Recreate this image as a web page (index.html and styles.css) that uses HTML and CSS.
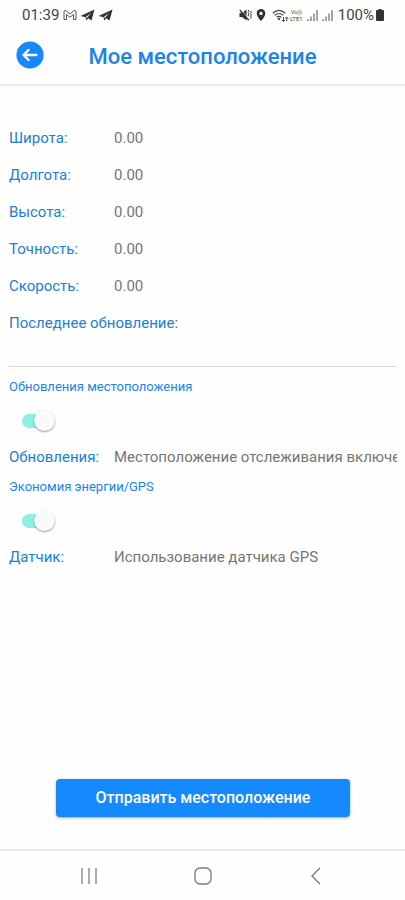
FILE: index.html
```
<!DOCTYPE html>
<html lang="ru">
<head>
<meta charset="utf-8">
<meta name="viewport" content="width=device-width, initial-scale=1">
<title>Мое местоположение</title>
<link rel="stylesheet" href="styles.css">
</head>
<body>
<div class="status">
  <span class="clock">01:39</span>
  <svg class="gmail" width="14" height="12" viewBox="0 0 14 12" fill="none" stroke="#555"><path d="M1 10.500V2.200Q1.700.8 3 1.700L7 5l4-3.300Q12.300.8 13 2.200v8.300h-2.500V5.500L7 8.200 3.500 5.500v5z"/></svg>
  <svg class="plane" width="15" height="12" viewBox="0 0 15 12"><path d="M.5 7 14.500.5 11.500 11.500 8.200 9.300 6.300 11.500 5.500 8.300z" fill="#333"/><path d="m5.500 8.300 5.500-4.300L7 8.800" fill="#fff"/></svg>
  <svg class="plane" width="15" height="12" viewBox="0 0 15 12"><path d="M.5 7 14.500.5 11.500 11.500 8.200 9.300 6.300 11.500 5.500 8.300z" fill="#333"/><path d="m5.500 8.300 5.500-4.300L7 8.800" fill="#fff"/></svg>
  <div class="indicators">
    <svg width="13" height="12" viewBox="0 0 13 12"><path d="M.5 4H3l4.500-3.500v11L3 8H.5z" fill="#333"/><path d="m1.500.3 9 10.400" stroke="#fff" stroke-width=".8"/><path d="m.8 1 9 10.200" stroke="#333" stroke-width="1.300"/><path d="m9 1 1 1.200L9 3.500l1 1.300-1 1.300 1 1.200M11.500 2l1 1.200-1 1.300 1 1.300-1 1.300 1 1.200-1 1.400" stroke="#333" fill="none"/></svg>
    <svg class="pin" width="10" height="12" viewBox="0 0 10 12"><path d="M5 0a4.300 4.300 0 0 0-4.300 4.400C.7 7.500 5 12 5 12s4.300-4.500 4.300-7.600A4.300 4.300 0 0 0 5 0zm0 2.800a1.600 1.600 0 1 1 0 3.200 1.600 1.600 0 0 1 0-3.200z" fill="#333" fill-rule="evenodd"/></svg>
    <svg class="wifi" width="17" height="13" viewBox="0 0 17 13" fill="none" stroke="#444" stroke-width="1.200"><path d="M.8 4.200q6.200-5.500 12.400 0M2.700 6.300q4.300-3.600 8.600 0M4.600 8.300q2.400-2 4.800 0"/><path d="m7 8.500 1.500 1.500L7 11.500 5.500 10z" fill="#444" stroke="none"/><path d="M11.500 8v4.500m-1.500-1.500 1.500 1.500L13 11M14.800 12V8m-1.500 1.500L14.800 8l1.500 1.500" stroke-width="1"/></svg>
    <span class="lte"><span>Vo))</span><span>LTE1</span></span>
    <svg class="signal" width="11" height="11" viewBox="0 0 11 11" stroke="#777" stroke-width="1.300"><path d="M1 11V9M4 11V6.500M7 11V3.500M10 11V0"/></svg>
    <svg class="signal" width="11" height="11" viewBox="0 0 11 11" stroke="#777" stroke-width="1.300"><path d="M1 11V9M4 11V6.500M7 11V3.500M10 11V0"/></svg>
    <span class="percent">100%</span>
    <svg class="battery" width="8" height="12" viewBox="0 0 8 12"><path d="M2.500 0h3v1H7q1 0 1 1v9q0 1-1 1H1q-1 0-1-1V2q0-1 1-1h1.500z" fill="#333"/></svg>
  </div>
</div>
<header class="appbar">
  <button class="back" type="button" aria-label="Назад"><svg width="28" height="28" viewBox="0 0 28 28"><circle cx="14" cy="14" r="13.600" fill="#1589fb"/><path d="M20.500 14H7.500m5-5-5 5 5 5" fill="none" stroke="#fff" stroke-width="2.300" stroke-linecap="round" stroke-linejoin="round"/></svg></button>
  <h1>Мое местоположение</h1>
</header>
<main>
  <dl class="readings">
    <div class="row"><dt>Широта:</dt><dd>0.00</dd></div>
    <div class="row"><dt>Долгота:</dt><dd>0.00</dd></div>
    <div class="row"><dt>Высота:</dt><dd>0.00</dd></div>
    <div class="row"><dt>Точность:</dt><dd>0.00</dd></div>
    <div class="row"><dt>Скорость:</dt><dd>0.00</dd></div>
    <div class="row"><dt>Последнее обновление:</dt><dd></dd></div>
  </dl>
  <section class="setting">
    <label for="updates">Обновления местоположения</label>
    <input class="switch" id="updates" type="checkbox" role="switch" checked>
    <div class="state"><span class="name">Обновления:</span><span class="value">Местоположение отслеживания включено</span></div>
  </section>
  <section class="setting">
    <label for="sensor">Экономия энергии/GPS</label>
    <input class="switch" id="sensor" type="checkbox" role="switch" checked>
    <div class="state"><span class="name">Датчик:</span><span class="value">Использование датчика GPS</span></div>
  </section>
  <button class="send" type="button">Отправить местоположение</button>
</main>
<nav class="navbar">
  <button type="button" aria-label="Недавние"><svg width="18" height="18" viewBox="0 0 18 18" stroke="#777" stroke-width="1.200"><path d="M2 1v16M9 1v16M16 1v16"/></svg></button>
  <button type="button" aria-label="Домой"><svg width="18" height="18" viewBox="0 0 18 18" fill="none" stroke="#777" stroke-width="1.300"><rect x="1" y="1" width="16" height="16" rx="5"/></svg></button>
  <button type="button" aria-label="Назад"><svg width="18" height="18" viewBox="0 0 18 18" fill="none" stroke="#777" stroke-width="1.300"><path d="M13 1 5 9l8 8"/></svg></button>
</nav>
</body>
</html>
```
FILE: styles.css
```
* { box-sizing: border-box; }
body {
  margin: 0;
  min-height: 100vh;
  display: flex;
  flex-direction: column;
  background: #fefefe;
  color: #757575;
  font: 15px/20px Roboto, sans-serif;
}
button { border: 0; padding: 0; background: none; font: inherit; }
svg { display: block; flex: none; }
.status {
  display: flex;
  align-items: center;
  height: 30px;
  padding: 0 21px 0 22px;
  color: #444;
}
.gmail { margin-left: 4px; }
.plane { margin-left: 3px; }
.indicators { display: flex; align-items: center; margin-left: auto; }
.pin { margin-left: 4px; }
.wifi { margin-left: 6px; }
.lte {
  display: flex;
  flex-direction: column;
  align-items: center;
  margin-left: 1px;
  font-size: 6px;
  line-height: 7px;
}
.signal { margin-left: 4px; }
.percent { margin-left: 5px; }
.battery { margin-left: 2px; }
.appbar {
  position: relative;
  display: flex;
  align-items: center;
  justify-content: center;
  height: 54px;
  box-shadow: 0 2px 2px #00000016;
}
.appbar h1 { margin: 0; color: #1c84e8; font-size: 22px; font-weight: 500; line-height: 28px; }
.back { position: absolute; left: 16px; top: 11px; }
main { flex: 1; display: flex; flex-direction: column; padding: 35px 8px 32px 9px; }
.readings { margin: 0; padding-bottom: 25px; border-bottom: 1px solid #d8d8d8; }
.row, .state { display: flex; align-items: center; }
.row { height: 37px; }
dt, .name { flex: none; min-width: 105px; color: #1c7fcf; }
dd { margin: 0; }
.setting { display: flex; flex-direction: column; padding-top: 10px; }
.setting label { color: #1c84e8; font-size: 13px; }
.switch {
  appearance: none;
  position: relative;
  width: 33px;
  height: 14px;
  margin: 17px 13px 19px;
  border-radius: 7px;
  background: #8eefe5;
}
.switch::after {
  content: "";
  position: absolute;
  right: 0;
  top: -4px;
  width: 21px;
  height: 21px;
  border-radius: 50%;
  background: #fafafa;
  box-shadow: 0 1px 2px #0006;
}
.state .value { overflow: hidden; white-space: nowrap; }
.send {
  align-self: center;
  width: 76%;
  height: 38px;
  margin-top: auto;
  border-radius: 4px;
  background: #148afd;
  box-shadow: 0 1px 3px #0005;
  color: #fff;
  font-size: 16px;
  font-weight: 500;
}
.navbar {
  display: flex;
  height: 51px;
  padding: 0 32px;
  border-top: 2px solid #e8e8e8;
}
.navbar button { flex: 1; display: grid; place-items: center; }
```
